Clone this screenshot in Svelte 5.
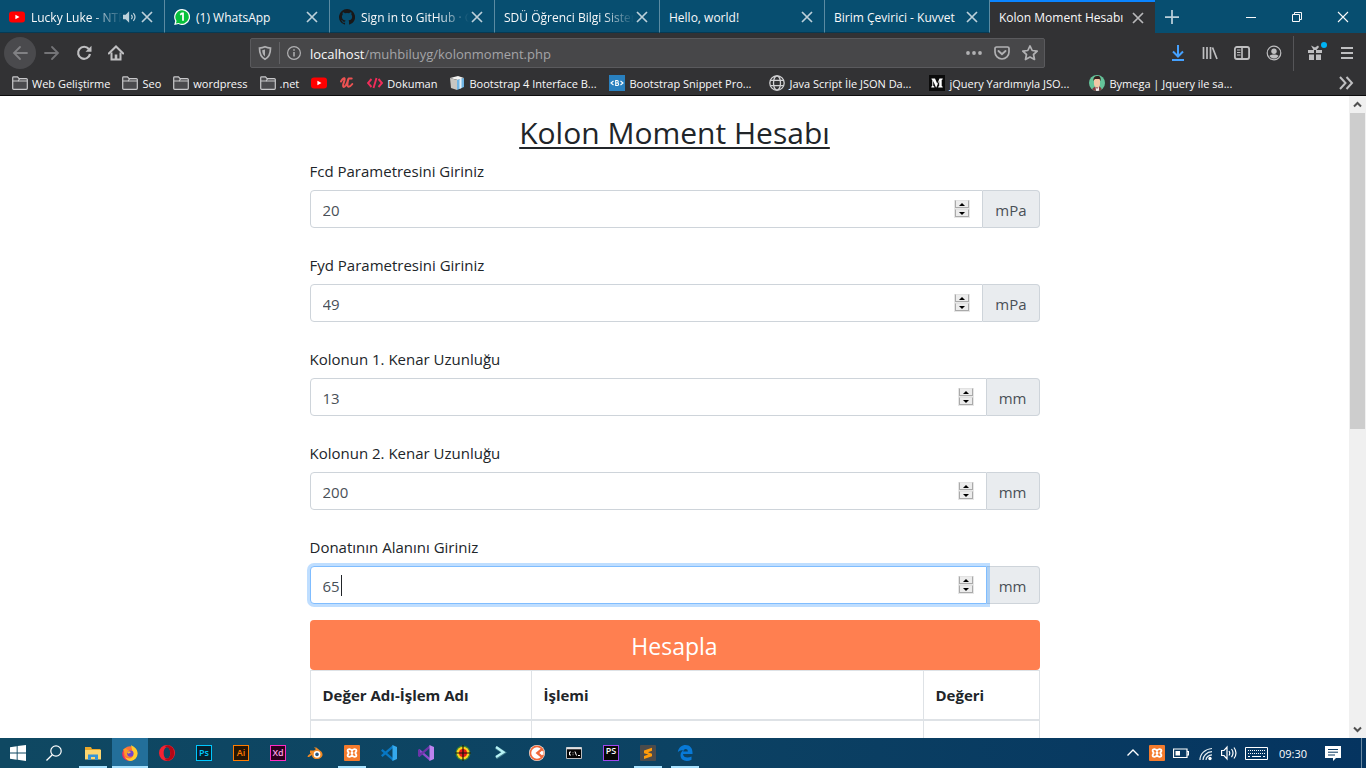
<script>
  const tabs = [
    { title: 'Lucky Luke - NTR', icon: 'youtube', sound: true, fade: true },
    { title: '(1) WhatsApp', icon: 'whatsapp' },
    { title: 'Sign in to GitHub · G', icon: 'github', fade: true },
    { title: 'SDÜ Öğrenci Bilgi Sistem', fade: true },
    { title: 'Hello, world!' },
    { title: 'Birim Çevirici - Kuvvet' },
    { title: 'Kolon Moment Hesabı', active: true }
  ];
  const bookmarks = [
    { label: 'Web Geliştirme', icon: 'folder' },
    { label: 'Seo', icon: 'folder' },
    { label: 'wordpress', icon: 'folder' },
    { label: '.net', icon: 'folder' },
    { label: '', name: 'YouTube', icon: 'youtube' },
    { label: '', name: 'Udemy', icon: 'udemy' },
    { label: 'Dokuman', icon: 'code' },
    { label: 'Bootstrap 4 Interface B...', icon: 'box', full: true },
    { label: 'Bootstrap Snippet Pro...', icon: 'snippet', full: true },
    { label: 'Java Script İle JSON Da...', icon: 'globe', full: true },
    { label: 'jQuery Yardımıyla JSO...', icon: 'medium', full: true },
    { label: 'Bymega | Jquery ile sa...', icon: 'avatar', full: true }
  ];
  const fields = [
    { id: 'fcd', label: 'Fcd Parametresini Giriniz', value: 20, unit: 'mPa' },
    { id: 'fyd', label: 'Fyd Parametresini Giriniz', value: 49, unit: 'mPa' },
    { id: 'kenar1', label: 'Kolonun 1. Kenar Uzunluğu', value: 13, unit: 'mm' },
    { id: 'kenar2', label: 'Kolonun 2. Kenar Uzunluğu', value: 200, unit: 'mm' },
    { id: 'alan', label: 'Donatının Alanını Giriniz', value: 65, unit: 'mm', focused: true }
  ];
  let values = $state(fields.map((f) => f.value));
  const apps = [
    { icon: 'explorer', open: true },
    { icon: 'firefox', open: true, current: true },
    { icon: 'opera' },
    { icon: 'ps' },
    { icon: 'ai' },
    { icon: 'xd' },
    { icon: 'blender' },
    { icon: 'xampp', open: true },
    { icon: 'vscode' },
    { icon: 'vs' },
    { icon: 'target' },
    { icon: 'arrow' },
    { icon: 'postman' },
    { icon: 'terminal' },
    { icon: 'phpstorm' },
    { icon: 'sublime', open: true },
    { icon: 'edge', open: true }
  ];
</script>

{#snippet icon(name)}
  <svg class="icon" viewBox="0 0 16 16" aria-hidden="true">
    {#if name === 'youtube'}
      <rect y="2.5" width="16" height="11" rx="3" fill="#f00" /><path d="M6.4 5.7v4.6L10.5 8z" fill="#fff" />
    {:else if name === 'whatsapp'}
      <path d="M8 0a8 8 0 1 1-3.6 15.1L.2 16l1-4A8 8 0 0 1 8 0z" fill="#fff" /><path d="M8 1.2A6.8 6.8 0 1 1 4.6 13.900L1.900 14.500l.7-2.600A6.800 6.800 0 0 1 8 1.200z" fill="#08c13b" /><path d="M6.200 5.700 8 4.300h1v7.400" fill="none" stroke="#fff" stroke-width="1.800" />
    {:else if name === 'github'}
      <path fill="#191717" d="M8 0a8 8 0 0 0-2.530 15.590c.4.070.55-.17.550-.380v-1.490c-2.230.49-2.690-.94-2.690-.94-.36-.92-.89-1.170-.89-1.170-.73-.5.050-.49.050-.49.810.06 1.230.83 1.230.83.720 1.230 1.880.87 2.340.67.070-.52.280-.87.510-1.070-1.780-.2-3.640-.89-3.640-3.950 0-.87.310-1.590.82-2.150-.080-.2-.36-1.020.080-2.120 0 0 .67-.21 2.200.82a7.600 7.600 0 0 1 4 0c1.530-1.040 2.200-.82 2.200-.82.440 1.100.160 1.920.080 2.120.510.560.820 1.280.820 2.150 0 3.070-1.870 3.750-3.650 3.950.29.250.54.730.54 1.480v2.190c0 .210.150.46.550.380A8 8 0 0 0 8 0z" />
    {:else if name === 'folder'}
      <path d="M.7 13.300V2.700c0-.5.300-.8.800-.8h4l1.600 1.700h7.200c.6 0 1 .3 1 .9v8.800c0 .6-.4 1-1 1H1.700c-.6 0-1-.4-1-1z" fill="#4a4a4d" stroke="#c8c8ca" stroke-width="1.200" /><path d="M1 6h5l1.500-2" fill="none" stroke="#c8c8ca" stroke-width="1.200" /><path d="M6 6h9" stroke="#c8c8ca" />
    {:else if name === 'udemy'}
      <path d="M2 6.500C3 4.500 4.500 3 5.500 3.300 6.800 4 3 10 4.300 11.600c1.200 1.400 4-2.600 5-7.600-.8 3.500-1.600 7.500.2 7.700 1.300.100 2.700-1.200 3.800-2.700M9.700 3.600h3" fill="none" stroke="#ec5252" stroke-width="2" stroke-linecap="round" />
    {:else if name === 'code'}
      <path d="M4.500 4 1 8l3.500 4M11.500 4 15 8l-3.500 4M9.500 3l-3 10" fill="none" stroke="#f22d5a" stroke-width="1.900" />
    {:else if name === 'box'}
      <path d="m1 3 8-2 6 2-6 2z" fill="#f4f4f2" /><path d="m1 3 7 2v10l-6-2z" fill="#c7c6c2" /><path d="m8 5 7-2v9l-7 3z" fill="#70b5e4" /><path d="M10.500 4.200 12.500 3.700v9.400l-2 .9z" fill="#e6f1f8" />
    {:else if name === 'snippet'}
      <rect width="16" height="16" fill="#2980bf" /><path d="M4.500 6 2 8l2.500 2M11.500 6 14 8l-2.500 2M6.700 5.500v5h1.800c1.500 0 1.500-2.500 0-2.500H6.700h1.500c1.400 0 1.400-2.500 0-2.500z" fill="none" stroke="#fff" stroke-width="1.100" />
    {:else if name === 'globe'}
      <g fill="none" stroke="#d0d0d2" stroke-width="1.300"><circle cx="8" cy="8" r="7.200" /><ellipse cx="8" cy="8" rx="3.500" ry="7.200" /><path d="M1.500 5.300h13M1.500 10.700h13" /></g>
    {:else if name === 'medium'}
      <rect width="16" height="16" fill="#0b0b0b" /><path d="M2.500 3.500H6l2.300 5.200 2.200-5.200h3.200v.8l-1 .7v6l1 .7v.8H9.200v-.8l1-.7V5.700L7.300 12.500H7L4.200 6v4.700l1.200 1v.8H2.300v-.8l1-1V5l-.8-.8z" fill="#fff" />
    {:else if name === 'avatar'}
      <clipPath id="disc"><circle cx="8" cy="8" r="8" /></clipPath><g clip-path="url(#disc)"><rect width="16" height="16" fill="#65c39a" /><path d="M3 16c0-4 3-4 5-5 3 0 5 2 5 5z" fill="#813a3f" /><path d="M5 4h6v5c0 2-1 3.500-2.700 3.500S5 11 5 9z" fill="#f3c6a5" /><path d="M4.300 6C4 2.500 6 .8 8.500 1c2.800 0 3.700 2 3 5.200L10.500 4H6z" fill="#35221f" /><path d="M6.500 11.500 8 14l2-2.500V16H7z" fill="#eee" /></g>
    {:else if name === 'explorer'}
      <path d="M0 2h6l1 2h8.500v10H0z" fill="#e9a82b" /><path d="M0 5h16v9.500H0z" fill="#fdd670" /><path d="M3 15V9.500h10V15h-3v-3H6v3z" fill="#3594d7" />
    {:else if name === 'firefox'}
      <circle cx="8" cy="8.500" r="7.300" fill="#ff7139" /><path d="M9 0c2.500 1.700 6.500 3.500 6.500 8A7.500 7.500 0 0 1 9 16c-3 0-5-1.500-6.500-4 5 3 9 1 8.500-3S9.500 3.500 9 0z" fill="#ffcb2c" /><path d="M1 4c1 .5 2-.2 3-1 .3 1.300 1.500 2 3 2L5 8l4 2c-3 3.500-6 1.500-6.500-2z" fill="#ff9928" /><circle cx="8.400" cy="8.600" r="3.200" fill="#7143cf" /><path d="M2 5c-1.500 5 0 9 5 10.600C-1 15.500-.8 7 2 5z" fill="#f32365" /><path d="M5 7c1.500-1 3-.8 4 .3L6.500 8.700z" fill="#ffb928" />
    {:else if name === 'opera'}
      <path fill-rule="evenodd" d="M8 0a8 8 0 1 0 0 16A8 8 0 0 0 8 0zm0 2.300c2 0 3.300 2.500 3.300 5.700s-1.300 5.700-3.300 5.700S4.700 11.200 4.700 8 6 2.300 8 2.300z" fill="#f42232" /><path d="M10 .5a8 8 0 0 1 0 15c-2 .6-3.500-.4-4.300-2C9 15 11.500 12 11.300 8S9 1 5.700 2.500C6.800.5 8.500 0 10 .5z" fill="#b40715" />
    {:else if name === 'blender'}
      <path d="M1 10.500 9 4 6.800 2.500h2.500l5.200 4.300c3 4-1 7.500-4.500 7.300-3 0-5-1.800-5-4.200L2 12H.5zM3 5.600h5L6 8H3z" fill="#f08a24" /><circle cx="10" cy="9.400" r="3.300" fill="#fff" /><circle cx="10" cy="9.400" r="1.800" fill="#235785" />
    {:else if name === 'xampp'}
      <rect width="16" height="16" rx="1" fill="#f47b2d" /><path d="M8 5.800C7.300 4 3.600 3.400 3.600 5.800c0 1.200 1.100 1.200 1.100 2.200s-1.100 1-1.100 2.200C3.600 12.600 7.300 12 8 10.200c.7 1.800 4.400 2.400 4.400 0 0-1.200-1.100-1.200-1.100-2.200s1.100-1 1.100-2.200C12.400 3.400 8.700 4 8 5.800zM6.700 8h2.600" fill="none" stroke="#fff" stroke-width="1.800" />
    {:else if name === 'vscode' || name === 'vs'}
      {@const dark = name === 'vs' ? '#6b35a8' : '#0878c4'}
      {@const light = name === 'vs' ? '#bd83f0' : '#35a9ed'}
      <path d="M1.500 4 12 13V16L0 5.800z" fill={name === 'vs' ? '#8d4bce' : dark} /><path d="M1.500 12 12 3V0L0 10.200z" fill={dark} /><path d="m11.500 0 4.500 2v12l-4.500 2z" fill={light} />{#if name === 'vs'}<path d="M0 4.800 2 4v8l-2-.8z" fill={dark} />{/if}
    {:else if name === 'target'}
      <circle cx="8" cy="8" r="7.500" fill="#3b8734" /><circle cx="8" cy="8" r="6.300" fill="#ffd21e" /><circle cx="8" cy="8" r="4" fill="#e71b17" /><path d="M8 0v16M0 8h16" stroke="#181410" stroke-width="1.200" />
    {:else if name === 'arrow'}
      <path d="M4 2.500 12 7.500 4 13" fill="none" stroke="#427b8c" stroke-width="3.300" /><path d="M4 2 11.500 7.200 4 12" fill="none" stroke="#b7f2f5" stroke-width="2.300" />
    {:else if name === 'postman'}
      <circle cx="8" cy="8" r="8" fill="#f6efe9" /><circle cx="8" cy="8" r="6.600" fill="#fff" stroke="#f0683a" stroke-width="1.700" /><path d="M12.500 3 6.500 8l6 5 1.500-1.800L10.300 8 14 4.800z" fill="#f0683a" /><path d="m14.500 5.500-3 2.500 3 2.500z" fill="#fff" />
    {:else if name === 'terminal'}
      <path d="M.5 2.500h15v11H.5z" fill="#050505" stroke="#babdc0" /><path d="M.5 3.300h15" stroke="#dfe1e3" stroke-width="2" /><path d="M5 7H3.500v3H5M7 7.500v.7M7 9.500v.7M9 6.500l1.500 4M12 10.500h2" fill="none" stroke="#fff" />
    {:else if name === 'sublime'}
      <rect width="16" height="16" rx="1" fill="#4b4b4b" /><path d="m4 5.500 8-2.800v3L8 7.200l4 1.600v2.400l-8 2.900v-3l4.300-1.500L4 8.200z" fill="#ff9b0a" />
    {:else if name === 'edge'}
      <path fill-rule="evenodd" d="M.8 7.200C1.500 2.500 5 0 8.600 0 13 0 15.500 3.300 15.500 7.500v1.600H6c.2 3.600 5 4.500 8.500 2.400v3.200c-5 2.600-11 .8-11-4.500 0-2.600 1.500-4.400 3.500-5.300C3.500 5 1.500 6.300.8 7.200zM6.200 6.500h4.700C10.800 3 6.500 3.300 6.200 6.500z" fill="#0879d7" />
    {:else if name === 'back'}
      <path d="M15 8H2m6-6L2 8l6 6" fill="none" stroke="currentColor" stroke-width="1.800" stroke-linecap="round" />
    {:else if name === 'forward'}
      <path d="M1 8h13M8 2l6 6-6 6" fill="none" stroke="currentColor" stroke-width="1.800" stroke-linecap="round" />
    {:else if name === 'reload'}
      <path d="M12.800 4A6 6 0 1 0 14 9" fill="none" stroke="currentColor" stroke-width="2.200" /><path d="M15.500.8v6H9.500z" fill="currentColor" />
    {:else if name === 'home'}
      <path d="M.8 8.500 8 1.500l7.200 7" fill="none" stroke="currentColor" stroke-width="2" stroke-linecap="round" /><path d="M3.500 7.500v7h9v-7" fill="none" stroke="currentColor" stroke-width="2" /><path d="M6.700 9.500h2.600V14H6.700z" fill="currentColor" />
    {:else if name === 'shield'}
      <path d="M8 1.800c2 .9 3.700 1.200 5.500 1.300 0 5.500-1 9-5.500 11.200C3.500 12.100 2.500 8.600 2.500 3.100 4.300 3 6 2.700 8 1.800z" fill="none" stroke="currentColor" stroke-width="1.700" /><path d="M8 4.500v7c-2-1.500-2.700-3.500-2.800-6.300z" fill="currentColor" />
    {:else if name === 'info'}
      <circle cx="8" cy="8" r="6.400" fill="none" stroke="currentColor" stroke-width="1.200" /><path d="M8 7v4.500M8 4.200v1.500" stroke="currentColor" stroke-width="1.500" />
    {:else if name === 'dots'}
      <g fill="currentColor"><circle cx="2" cy="8" r="1.900" /><circle cx="8" cy="8" r="1.900" /><circle cx="14" cy="8" r="1.900" /></g>
    {:else if name === 'pocket'}
      <path d="M2.500 2h11c.8 0 1.500.5 1.500 1.300V7a7 7 0 0 1-14 0V3.300C1 2.500 1.700 2 2.500 2z" fill="none" stroke="currentColor" stroke-width="1.700" /><path d="m4.500 6 3.500 3.300L11.500 6" fill="none" stroke="currentColor" stroke-width="1.900" stroke-linecap="round" />
    {:else if name === 'star'}
      <path d="m8 .9 2.200 4.600 5 .6-3.700 3.400 1 5L8 12l-4.500 2.500 1-5L.8 6.100l5-.6z" fill="none" stroke="currentColor" stroke-width="1.700" stroke-linejoin="round" />
    {:else if name === 'download'}
      <path d="M8 0v11M3 6.500 8 11.500l5-5M2 15h12" fill="none" stroke="currentColor" stroke-width="2" />
    {:else if name === 'library'}
      <path d="M1.500 2v12M5 2v12M8.500 2v12M10.500 2.500l4.500 11.500" stroke="currentColor" stroke-width="1.700" />
    {:else if name === 'sidebar'}
      <rect x=".9" y="2" width="14.200" height="12" rx="2" fill="none" stroke="currentColor" stroke-width="1.800" /><path d="M8 2v12" stroke="currentColor" stroke-width="1.600" /><path d="M3 5h3.500M3 7.500h3.500M3 10h3.500" stroke="currentColor" />
    {:else if name === 'account'}
      <circle cx="8" cy="8" r="6.800" fill="none" stroke="currentColor" stroke-width="1.200" /><circle cx="8" cy="6.300" r="2.700" fill="currentColor" /><path d="M3.300 11c1.500-1.200 2.500-1.600 4.700-1.600s3.200.4 4.700 1.600c-2.700 3.400-6.700 3.400-9.400 0z" fill="currentColor" />
    {:else if name === 'gift'}
      <path d="M1 5h6v3H1zM9 5h6v3H9zM2 9.500h5V15H2zM9 9.500h5V15H9zM4 .5l4 2 3-2 1 1.500-2.500 3h-3z" fill="currentColor" />
    {:else if name === 'menu'}
      <path d="M2 3h12M2 8h12M2 13h12" stroke="currentColor" stroke-width="2" />
    {:else if name === 'close'}
      <path d="m3 3 10 10M13 3 3 13" stroke="currentColor" stroke-width="1.700" />
    {:else if name === 'plus'}
      <path d="M8 0v16M0 8h16" stroke="currentColor" stroke-width="2" />
    {:else if name === 'sound'}
      <path d="M0 5.500h3l4-4v13l-4-4H0z" fill="currentColor" /><path d="M9.500 5.500c1.300 1.500 1.300 3.500 0 5M11.800 3.500c2.300 2.700 2.300 6.300 0 9" fill="none" stroke="currentColor" stroke-width="1.400" />
    {:else if name === 'more'}
      <path d="m2 2 5.500 6L2 14M8.500 2 14 8l-5.500 6" fill="none" stroke="currentColor" stroke-width="2" />
    {:else if name === 'minimize'}
      <path d="M3 8.500h10" stroke="currentColor" />
    {:else if name === 'restore'}
      <path d="M3.500 5.500h7v7h-7zM5.500 5.500v-2h7v7h-2" fill="none" stroke="currentColor" />
    {:else if name === 'quit'}
      <path d="m3 3 10 10M13 3 3 13" stroke="currentColor" stroke-width="1.100" />
    {:else if name === 'windows'}
      <path d="m0 2.300 6.700-1v6.300H0zM7.600 1.100 16 0v7.600H7.600zM0 8.500h6.700v6.200L0 13.800zM7.600 8.500H16V16l-8.400-1.200z" fill="#fff" />
    {:else if name === 'search'}
      <circle cx="10" cy="6" r="5.200" fill="none" stroke="#fff" stroke-width="1.200" /><path d="M6.300 9.700.5 15.500" stroke="#fff" stroke-width="1.300" />
    {:else if name === 'up'}
      <path d="m2.500 10.500 5.500-5.500 5.500 5.500" fill="none" stroke="#fff" stroke-width="1.400" />
    {:else if name === 'battery'}
      <path d="M.5 4h13.500v8.500H.5zM14 6.500h1.500v3.500H14" fill="none" stroke="#fff" stroke-width="1.200" /><path d="M2.500 6H7v4.500H2.500z" fill="#fff" />
    {:else if name === 'wifi'}
      <g fill="none" stroke="#e5edf2" stroke-width="1.200"><path d="M3 15C3 9 8 4 15 3.500M6 15c0-4 3.500-8 9-8.300M9 15c0-2.500 2.500-5 6-5.200" /></g><circle cx="13" cy="13.500" r="1.700" fill="#fff" />
    {:else if name === 'volume'}
      <path d="M.6 5.500H3L6 2v12l-3-3.500H.600zM8 6c1 1.500 1 3 0 4.500M10.500 4c2 2.700 2 5.500 0 8.200M13 2.500c2.500 3.500 2.500 7.500 0 11" fill="none" stroke="#fff" stroke-width="1.200" />
    {:else if name === 'notice'}
      <path d="M0 1h16v12h-5l-3 3v-3H0z" fill="#fff" /><path d="M3 4.500h10M3 7.200h10M3 10h7" stroke="#0a3960" />
    {/if}
  </svg>
{/snippet}

<div class="screen">
  <header class="browser">
    <div class="tabs">
      {#each tabs as tab}
        <div class="tab" class:active={tab.active}>
          {#if tab.icon}{@render icon(tab.icon)}{/if}
          <span class="title" class:fade={tab.fade}>{tab.title}</span>
          {#if tab.sound}<button class="mute" aria-label="Sessize al">{@render icon('sound')}</button>{/if}
          <button class="close" aria-label="Sekmeyi kapat">{@render icon('close')}</button>
        </div>
      {/each}
      <button class="new-tab" aria-label="Yeni sekme">{@render icon('plus')}</button>
      <div class="window-buttons">
        <button aria-label="Küçült">{@render icon('minimize')}</button>
        <button aria-label="Geri yükle">{@render icon('restore')}</button>
        <button aria-label="Kapat">{@render icon('quit')}</button>
      </div>
    </div>
    <nav class="toolbar">
      <div class="history">
        <button class="back" aria-label="Geri">{@render icon('back')}</button>
        <button class="dim" aria-label="İleri">{@render icon('forward')}</button>
        <button aria-label="Yenile">{@render icon('reload')}</button>
        <button aria-label="Ana sayfa">{@render icon('home')}</button>
      </div>
      <div class="address">
        <span class="shield">{@render icon('shield')}</span>
        {@render icon('info')}
        <span class="url"><b>localhost</b>/muhbiluyg/kolonmoment.php</span>
        <button aria-label="Sayfa eylemleri">{@render icon('dots')}</button>
        <button aria-label="Pocket">{@render icon('pocket')}</button>
        <button aria-label="Yer imi">{@render icon('star')}</button>
      </div>
      <div class="tools">
        <button class="download" aria-label="İndirilenler">{@render icon('download')}</button>
        <button aria-label="Kitaplık">{@render icon('library')}</button>
        <button aria-label="Kenar çubuğu">{@render icon('sidebar')}</button>
        <button aria-label="Hesap">{@render icon('account')}</button>
        <button class="gift" aria-label="Yenilikler">{@render icon('gift')}</button>
        <button aria-label="Menü">{@render icon('menu')}</button>
      </div>
    </nav>
    <div class="bookmarks">
      {#each bookmarks as mark}
        <a href="#top" class="bookmark" class:full={mark.full} aria-label={mark.name}>
          {@render icon(mark.icon)}{#if mark.label}<span>{mark.label}</span>{/if}
        </a>
      {/each}
      <button class="overflow" aria-label="Diğer yer imleri">{@render icon('more')}</button>
    </div>
  </header>

  <div class="viewport">
    <main id="top">
      <h1>Kolon Moment Hesabı</h1>
      <form onsubmit={(e) => e.preventDefault()}>
        {#each fields as field, i}
          <div class="group">
            <label for={field.id}>{field.label}</label>
            <div class="row">
              <div class="control" class:focused={field.focused}>
                <input id={field.id} type="number" bind:value={values[i]} />
                {#if field.focused}<i class="caret"></i>{/if}
                <span class="spinner">
                  <button type="button" aria-label="Artır" onclick={() => values[i]++}><svg viewBox="0 0 6 3"><path d="M0 3 3 0l3 3z" /></svg></button>
                  <button type="button" aria-label="Azalt" onclick={() => values[i]--}><svg viewBox="0 0 6 3"><path d="M0 0h6L3 3z" /></svg></button>
                </span>
              </div>
              <span class="unit">{field.unit}</span>
            </div>
          </div>
        {/each}
        <button class="submit">Hesapla</button>
      </form>
      <table>
        <thead>
          <tr><th class="name">Değer Adı-İşlem Adı</th><th>İşlemi</th><th class="result">Değeri</th></tr>
        </thead>
        <tbody>
          <tr><td></td><td></td><td></td></tr>
        </tbody>
      </table>
    </main>
    <div class="scrollbar">
      <svg viewBox="0 0 17 17"><path d="m5 10.500 3.500-3.500 3.500 3.500" /></svg>
      <div class="track"><div class="thumb"></div></div>
      <svg viewBox="0 0 17 17"><path d="m5 6.500 3.500 3.500L12 6.500" /></svg>
    </div>
  </div>

  <footer class="taskbar">
    <button class="start" aria-label="Başlat">{@render icon('windows')}</button>
    <button class="start" aria-label="Ara">{@render icon('search')}</button>
    <div class="apps">
      {#each apps as app}
        <button class="app" class:open={app.open} class:current={app.current} aria-label={app.icon}>
          {#if app.icon === 'ps'}<span class="tile ps">Ps</span>
          {:else if app.icon === 'ai'}<span class="tile ai">Ai</span>
          {:else if app.icon === 'xd'}<span class="tile xd">Xd</span>
          {:else if app.icon === 'phpstorm'}<span class="tile storm">PS</span>
          {:else}{@render icon(app.icon)}{/if}
        </button>
      {/each}
    </div>
    <div class="tray">
      {@render icon('up')}
      {@render icon('xampp')}
      {@render icon('battery')}
      {@render icon('wifi')}
      {@render icon('volume')}
      <svg class="keyboard" viewBox="0 0 23 13" aria-hidden="true"><path d="M.5.500h22v12H.500z" fill="none" stroke="#fff" /><path d="M3 3.500h18M3 6.500h18" stroke="#fff" stroke-dasharray="1 1" /><path d="M3 9.500h2M7 9.500h9M18 9.500h2" stroke="#fff" /></svg>
      <time>09:30</time>
      {@render icon('notice')}
      <span class="peek"></span>
    </div>
  </footer>
</div>

<style>
  :global(body) { margin: 0; }
  .screen, .screen * { box-sizing: border-box; }
  .screen {
    height: 100vh;
    display: flex;
    flex-direction: column;
    overflow: hidden;
    font-family: "Open Sans", "Noto Sans", sans-serif;
    font-size: 12px;
    color: #212529;
    background: #fff;
  }
  button { border: 0; padding: 0; background: none; color: inherit; font: inherit; }
  .icon { width: 16px; height: 16px; flex: none; display: block; }

  .browser { flex: none; background: #323234; color: #f9f9fa; border-bottom: 1px solid #0c0c0d; }
  .tabs { display: flex; height: 33px; background: #074e70; }
  .tab {
    flex: 0 1 165px;
    min-width: 0;
    display: flex;
    align-items: center;
    padding: 2px 9px 0;
    border-right: 1px solid #5b8ba2;
    border-bottom: 1px solid #053a54;
  }
  .tab > .icon { margin-right: 6px; }
  .tab.active { background: #323234; border: 0; border-top: 2px solid #0a84ff; padding-top: 0; }
  .title { flex: 1; min-width: 0; overflow: hidden; white-space: nowrap; font-size: 12px; }
  .fade { mask-image: linear-gradient(to left, transparent, #000 32px); }
  .close, .mute { color: #bcd0da; }
  .mute { margin-right: 2px; }
  .mute .icon { width: 14px; height: 14px; }
  .active .close { color: #b8b8ba; }
  .new-tab { width: 34px; display: grid; place-items: center; color: #bcd0da; }
  .new-tab .icon { width: 14px; height: 14px; }
  .window-buttons { display: flex; margin-left: auto; }
  .window-buttons button { width: 46px; display: grid; place-items: center; }

  .toolbar { display: flex; align-items: center; height: 40px; color: #bfbfc1; }
  .history { display: flex; align-items: center; flex: 0 0 250px; padding-left: 4px; }
  .history button { width: 32px; height: 32px; display: grid; place-items: center; }
  .history .back { border-radius: 50%; background: #4a4a4d; color: #818184; }
  .history .dim { color: #747477; }
  .address {
    flex: 1 1 auto;
    min-width: 0;
    height: 30px;
    display: flex;
    align-items: center;
    gap: 8px;
    padding: 0 6px;
    border: 1px solid #5a5a5d;
    border-radius: 2px;
    background: #474749;
    color: #b1b1b3;
  }
  .address button { margin-left: 4px; }
  .shield { padding-right: 6px; border-right: 1px solid #616164; margin-right: -2px; }
  .shield .icon { height: 22px; }
  .url { flex: 1; min-width: 0; padding-top: 2px; overflow: hidden; white-space: nowrap; font-size: 13px; color: #a4a4a7; }
  .url b { font-weight: 400; color: #f9f9fa; }
  .tools { display: flex; flex: 0 0 321px; justify-content: flex-end; padding-right: 3px; }
  .tools button { width: 32px; height: 35px; display: grid; place-items: center; }
  .tools .download { color: #45a1ff; }
  .tools .gift { width: 38px; padding-left: 5px; border-left: 1px solid #555558; margin-left: 3px; position: relative; }
  .gift::after { content: ""; position: absolute; top: 6px; right: 4px; width: 6px; height: 6px; border-radius: 50%; background: #00b3f4; }

  .bookmarks { display: flex; align-items: center; height: 22px; padding: 0 12px 2px; gap: 12px; font-size: 11px; }
  .bookmark { display: flex; align-items: center; gap: 4px; color: inherit; text-decoration: none; white-space: nowrap; }
  .bookmark.full { flex: 0 1 148px; min-width: 0; }
  .bookmark:hover { background: #4a4a4d; }
  .overflow { margin-left: auto; color: #bfbfc1; }

  .viewport { flex: 1; min-height: 0; display: flex; overflow: hidden; }
  main { width: 100%; max-width: 730px; margin: 0 auto; padding-top: 18px; font-size: 15px; line-height: 24px; }
  h1 { margin: 0 0 7px; font-size: 30px; line-height: 38px; font-weight: 400; text-align: center; text-decoration: underline; text-decoration-thickness: 2px; text-underline-offset: 3px; }
  .group { margin-bottom: 25px; }
  .group:last-of-type { margin-bottom: 16px; }
  label { display: block; margin-bottom: 7px; }
  .row { display: flex; height: 38px; }
  .control {
    position: relative;
    flex: 1;
    min-width: 0;
    display: flex;
    align-items: center;
    padding: 0 12px;
    border: 1px solid #ced4da;
    border-radius: 4px 0 0 4px;
    background: #fff;
  }
  .control.focused { border-color: #80bdff; box-shadow: 0 0 0 3px #007bff40; z-index: 1; }
  input { flex: 1; min-width: 0; height: 36px; padding: 2px 0 0; border: 0; outline: 0; background: none; font: inherit; color: #495057; appearance: textfield; }
  input::-webkit-inner-spin-button { appearance: none; }
  .caret { position: absolute; left: 30px; top: 8px; width: 1px; height: 21px; background: #212529; }
  .spinner { display: grid; gap: 1px; width: 16px; height: 18px; background: #e6e6e6; padding: 0 1px 1px; }
  .spinner button { display: grid; place-items: center; background: #ececec; border: 1px solid #aaa; border-top-color: #e2e2e2; }
  .spinner svg { width: 6px; height: 3px; }
  .unit {
    padding: 7px 12px 0;
    border: 1px solid #ced4da;
    border-left: 0;
    border-radius: 0 4px 4px 0;
    background: #e9ecef;
    color: #495057;
  }
  .submit { display: block; width: 100%; height: 50px; padding-top: 1px; border-radius: 4px; background: #ff7f50; color: #fff; font-size: 23px; }
  table { width: 100%; border-collapse: collapse; table-layout: fixed; }
  th, td { height: 49px; padding: 12px; border: 1px solid #dee2e6; text-align: left; }
  th { border-bottom-width: 2px; font-weight: 700; }
  .name { width: 221px; }
  .result { width: 116px; }

  .scrollbar { flex: 0 0 17px; display: flex; flex-direction: column; background: #f0f0f0; }
  .scrollbar svg { width: 17px; height: 17px; fill: none; stroke: #505050; stroke-width: 2; }
  .track { flex: 1; }
  .thumb { height: 52%; margin: 0 1px; background: #cdcdcd; }

  .taskbar { flex: none; display: flex; height: 30px; background: linear-gradient(90deg, #0f4862, #0c4263 50%, #053460); }
  .start { width: 36px; display: grid; place-items: center; }
  .apps { display: flex; gap: 1px; margin-left: 3px; }
  .app { position: relative; width: 36px; display: grid; place-items: center; }
  .app.open::after { content: ""; position: absolute; bottom: 0; left: 4px; right: 4px; height: 2px; background: #a8e2ff; }
  .app.current { background: #236f9a; }
  .app.current::after { left: 0; right: 0; }
  .tile { width: 16px; height: 16px; border: 1px solid; font-size: 9px; line-height: 14px; font-weight: 600; text-align: center; }
  .ps { color: #00c8ff; background: #06202e; }
  .ai { color: #ff7c00; background: #271503; }
  .xd { color: #ff9fe4; background: #2d001e; border-color: #ff2bc2; }
  .storm { color: #fff; background: #080808; border-color: #a047ef; line-height: 10px; }
  .tray { display: flex; align-items: center; margin-left: auto; gap: 8px; color: #fff; }
  .keyboard { width: 23px; height: 13px; }
  time { margin: 0 10px 0 3px; font-size: 11px; }
  .peek { align-self: stretch; margin-left: 12px; width: 5px; border-left: 1px solid #6a89a3; }
</style>
